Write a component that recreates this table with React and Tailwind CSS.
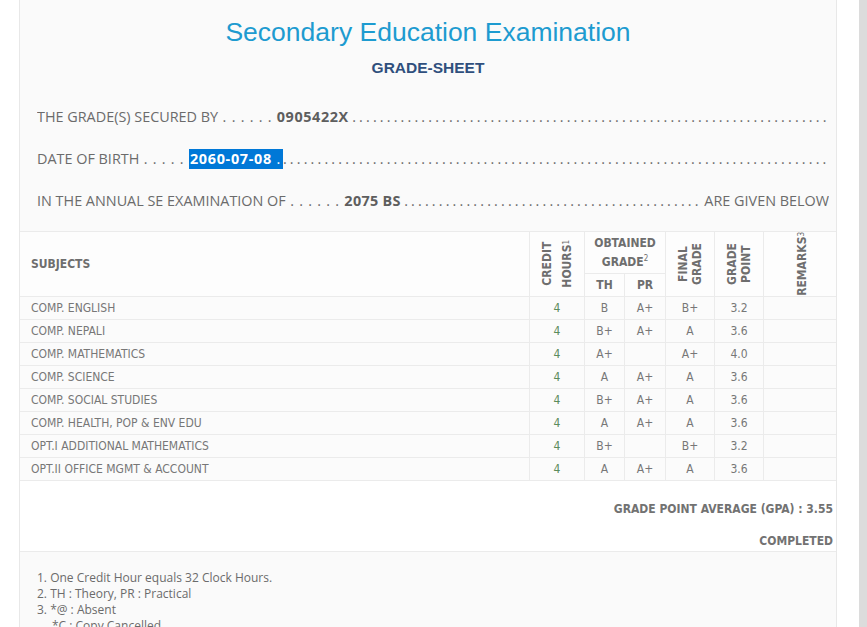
import React from "react";

const rows = [
  ["COMP. ENGLISH", "4", "B", "A+", "B+", "3.2"],
  ["COMP. NEPALI", "4", "B+", "A+", "A", "3.6"],
  ["COMP. MATHEMATICS", "4", "A+", "", "A+", "4.0"],
  ["COMP. SCIENCE", "4", "A", "A+", "A", "3.6"],
  ["COMP. SOCIAL STUDIES", "4", "B+", "A+", "A", "3.6"],
  ["COMP. HEALTH, POP & ENV EDU", "4", "A", "A+", "A", "3.6"],
  ["OPT.I ADDITIONAL MATHEMATICS", "4", "B+", "", "B+", "3.2"],
  ["OPT.II OFFICE MGMT & ACCOUNT", "4", "A", "A+", "A", "3.6"],
];

const DOTS = "\u00a0." + " .".repeat(200);

const cell = "border-r border-b border-[#ebebeb] flex items-center justify-center";
const vert = "[writing-mode:vertical-rl] rotate-180 text-center whitespace-nowrap";

export default function App() {
  return (
    <div className="relative bg-white overflow-hidden h-[627px]">
      <div className="absolute right-0 top-0 h-full w-[8px] bg-[#dcdcdc]" />
      <div className="ml-[19px] w-[818px] bg-[#fafafa] border-x border-[#e8e8e8] text-[#6b6b6b]">
        <div className="text-center text-[26.5px] leading-[36px] pt-[14px] text-[#1d9bd0] font-['Liberation_Sans',sans-serif]">
          Secondary Education Examination
        </div>
        <div className="text-center text-[15.5px] leading-[24px] mt-[6px] font-bold text-[#2f4f7d] font-['Liberation_Sans',sans-serif]">
          GRADE-SHEET
        </div>
        <div className="mt-[16px] pl-[17px] pr-[7px] text-[14.4px] font-['Open_Sans',sans-serif]">
          <div className="h-[42px] flex items-center whitespace-nowrap overflow-hidden">
            <span>THE GRADE(S) SECURED BY</span>
            <span className="tracking-[0.75px]">&nbsp;. . . . . .&nbsp;</span>
            <span className="font-bold tracking-[0.6px] text-[#5e5e5e]">0905422X</span>
            <span className="flex-1 overflow-hidden tracking-[-0.3px]">{DOTS}</span>
          </div>
          <div className="h-[42px] flex items-center whitespace-nowrap overflow-hidden">
            <span>DATE OF BIRTH</span>
            <span className="tracking-[0.75px]">&nbsp;. . . . .&nbsp;</span>
            <span className="bg-[#0078d7] text-white font-bold tracking-[0.7px] leading-[20px] pl-[1px] pr-[2px]">
              2060-07-08 <span className="font-normal">.</span>
            </span>
            <span className="flex-1 overflow-hidden tracking-[-0.3px]">{" ." + " .".repeat(200)}</span>
          </div>
          <div className="h-[42px] flex items-center whitespace-nowrap overflow-hidden">
            <span>IN THE ANNUAL SE EXAMINATION OF</span>
            <span className="tracking-[0.75px]">&nbsp;. . . . . .&nbsp;</span>
            <span className="font-bold tracking-[0.3px] text-[#5e5e5e]">2075 BS</span>
            <span className="flex-1 overflow-hidden tracking-[-0.3px]">{DOTS}</span>
            <span>&nbsp;ARE GIVEN BELOW</span>
          </div>
        </div>

        <div className="mt-[9px] border-t border-[#ebebeb] bg-[#fdfdfd] grid grid-cols-[510px_55px_40px_41px_49px_49px_72px] grid-rows-[42px_23px] text-[12px] font-['DejaVu_Sans_Condensed','DejaVu_Sans',sans-serif] font-bold text-[#6e6e6e]">
          <div className="row-span-2 border-r border-b border-[#ebebeb] flex items-center pl-[11px]">SUBJECTS</div>
          <div className={`row-span-2 ${cell}`}>
            <span className={`${vert} leading-[20px]`}>
              CREDIT
              <br />
              HOURS<span className="text-[8px] font-normal">1</span>
            </span>
          </div>
          <div className="col-span-2 border-r border-b border-[#ebebeb] text-center leading-[19px] pt-[2px]">
            OBTAINED
            <br />
            GRADE<span className="text-[8px] font-normal relative top-[-5px]">2</span>
          </div>
          <div className={`row-span-2 ${cell}`}>
            <span className={`${vert} leading-[14px]`}>
              FINAL
              <br />
              GRADE
            </span>
          </div>
          <div className={`row-span-2 ${cell}`}>
            <span className={`${vert} leading-[14px]`}>
              GRADE
              <br />
              POINT
            </span>
          </div>
          <div className="row-span-2 border-b border-[#ebebeb] flex items-center justify-center pl-[4px]">
            <span className={`${vert} leading-[16px]`}>
              REMARKS<span className="text-[8px] font-normal">3</span>
            </span>
          </div>
          <div className={cell}>TH</div>
          <div className={cell}>PR</div>
        </div>

        <div className="bg-[#fbfbfb] text-[12px] font-['DejaVu_Sans_Condensed','DejaVu_Sans',sans-serif] text-[#777]">
          {rows.map((r) => (
            <div key={r[0]} className="grid grid-cols-[510px_55px_40px_41px_49px_49px_72px] h-[23px]">
              <div className="border-r border-b border-[#ebebeb] flex items-center pl-[11px]">{r[0]}</div>
              <div className={`${cell} text-[#5b8c5b]`}>{r[1]}</div>
              <div className={cell}>{r[2]}</div>
              <div className={cell}>{r[3]}</div>
              <div className={cell}>{r[4]}</div>
              <div className={cell}>{r[5]}</div>
              <div className="border-b border-[#ebebeb]" />
            </div>
          ))}
        </div>

        <div className="bg-white border-b border-[#ebebeb] h-[71px] flex flex-col items-end pr-[3px] text-[12px] font-bold font-['DejaVu_Sans_Condensed','DejaVu_Sans',sans-serif] text-[#727272]">
          <div className="mt-[21px] leading-[14px]">GRADE POINT AVERAGE (GPA) : 3.55</div>
          <div className="mt-[18px] leading-[14px]">COMPLETED</div>
        </div>

        <div className="pt-[18px] pl-[17px] pb-[40px] text-[12px] leading-[16px] font-['Open_Sans',sans-serif] text-[#6b6b6b]">
          <div>1. One Credit Hour equals 32 Clock Hours.</div>
          <div>2. TH : Theory, PR : Practical</div>
          <div>3. *@ : Absent</div>
          <div className="pl-[15px]">*C : Copy Cancelled</div>
        </div>
      </div>
    </div>
  );
}
